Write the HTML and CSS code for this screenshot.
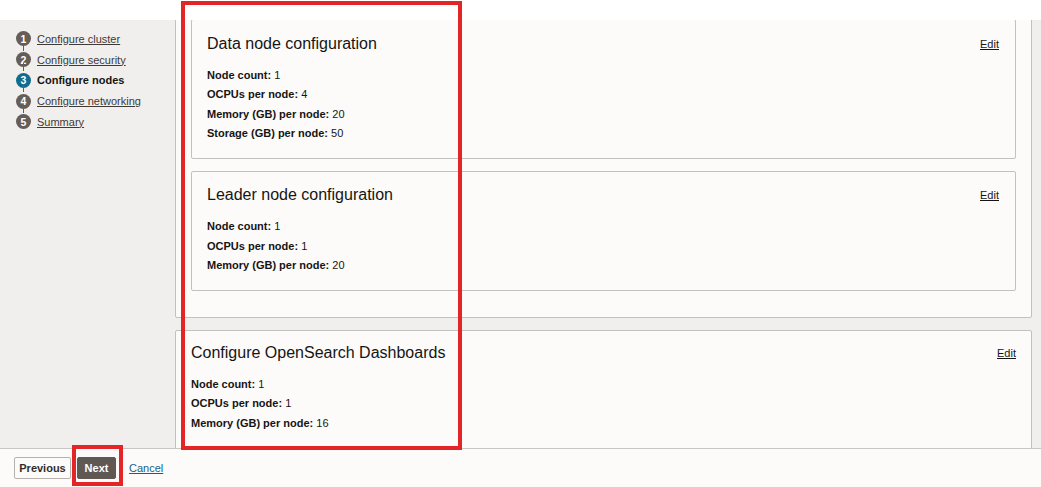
FILE: index.html
```html
<!DOCTYPE html>
<html>
<head>
<meta charset="utf-8">
<link rel="stylesheet" href="styles.css">
</head>
<body>
<div class="topbar"></div>
<div class="main">
  <nav class="sidebar">
    <div class="step"><span class="num">1</span><a class="step-link">Configure cluster</a></div>
    <div class="step"><span class="num">2</span><a class="step-link">Configure security</a></div>
    <div class="step active"><span class="num">3</span><span class="step-cur">Configure nodes</span></div>
    <div class="step"><span class="num">4</span><a class="step-link">Configure networking</a></div>
    <div class="step last"><span class="num">5</span><a class="step-link">Summary</a></div>
  </nav>
  <div class="content">
    <section class="panel first">
      <div class="card">
        <div class="card-head"><h2>Data node configuration</h2><a class="edit">Edit</a></div>
        <dl class="rows">
          <div><dt>Node count:</dt> <dd>1</dd></div>
          <div><dt>OCPUs per node:</dt> <dd>4</dd></div>
          <div><dt>Memory (GB) per node:</dt> <dd>20</dd></div>
          <div><dt>Storage (GB) per node:</dt> <dd>50</dd></div>
        </dl>
      </div>
      <div class="card">
        <div class="card-head"><h2>Leader node configuration</h2><a class="edit">Edit</a></div>
        <dl class="rows">
          <div><dt>Node count:</dt> <dd>1</dd></div>
          <div><dt>OCPUs per node:</dt> <dd>1</dd></div>
          <div><dt>Memory (GB) per node:</dt> <dd>20</dd></div>
        </dl>
      </div>
    </section>
    <section class="panel second">
      <div class="card-head"><h2>Configure OpenSearch Dashboards</h2><a class="edit">Edit</a></div>
      <dl class="rows">
        <div><dt>Node count:</dt> <dd>1</dd></div>
        <div><dt>OCPUs per node:</dt> <dd>1</dd></div>
        <div><dt>Memory (GB) per node:</dt> <dd>16</dd></div>
      </dl>
    </section>
  </div>
</div>
<footer class="footer">
  <button class="btn prev">Previous</button>
  <button class="btn next">Next</button>
  <a class="cancel">Cancel</a>
</footer>
<div class="mark mark-big"></div>
<div class="mark mark-next"></div>
</body>
</html>
```
FILE: styles.css
```css
* { box-sizing: border-box; }
html, body { margin: 0; padding: 0; }
body {
  width: 1041px;
  height: 487px;
  overflow: hidden;
  background: #ffffff;
  font-family: "Liberation Sans", Arial, sans-serif;
  color: #161513;
  position: relative;
}
.topbar { height: 20px; background: #ffffff; }
.main {
  display: flex;
  height: 428px;
  background: #f1efed;
  overflow: hidden;
}
.sidebar {
  width: 175px;
  flex: none;
  padding: 8.5px 0 0 16px;
}
.step {
  display: flex;
  align-items: center;
  height: 20.75px;
  position: relative;
  font-size: 11px;
}
.step::after {
  content: "";
  position: absolute;
  left: 7px;
  top: 14px;
  width: 1px;
  height: 8px;
  background: #655d57;
}
.step.last::after { display: none; }
.num {
  width: 15px;
  height: 15px;
  border-radius: 50%;
  background: #655d57;
  color: #fff;
  font-weight: bold;
  font-size: 10.5px;
  display: flex;
  align-items: center;
  justify-content: center;
  margin-right: 6px;
  flex: none;
}
.step.active .num { background: #116b8c; }
.step-link { color: #3f3a36; text-decoration: underline; }
.step-cur { color: #161513; font-weight: bold; }
.content {
  flex: 1;
  padding-right: 9px;
  overflow: hidden;
}
.panel {
  background: #fcfbfa;
  border: 1px solid #c4c0bb;
  border-radius: 2px;
}
.panel.first {
  margin-top: -17px;
  padding: 15px 15px 26px 15px;
}
.panel.second {
  margin-top: 12px;
  padding: 11px 14px 40px 15px;
}
.card {
  border: 1px solid #c4c0bb;
  border-radius: 2px;
  background: #fcfbfa;
  padding: 12.5px 15px 14px 15px;
}
.card + .card { margin-top: 12px; }
.card-head {
  display: flex;
  justify-content: space-between;
  align-items: center;
  height: 22px;
}
.card-head h2 {
  margin: 0;
  font-size: 16px;
  font-weight: normal;
  color: #161513;
  line-height: 22px;
}
.edit {
  font-size: 11px;
  color: #161513;
  text-decoration: underline;
  margin-right: 1px;
}
.rows {
  margin: 11px 0 0 0;
  font-size: 11px;
  line-height: 19.5px;
}
.rows dt { display: inline; font-weight: bold; }
.rows dd { display: inline; margin: 0; }
.footer {
  height: 39px;
  border-top: 1px solid #c9c5c0;
  background: #fcfbfa;
  display: flex;
  align-items: flex-start;
  padding: 8px 0 0 14px;
}
.btn {
  height: 22px;
  font-family: "Liberation Sans", Arial, sans-serif;
  font-size: 11px;
  font-weight: bold;
  border-radius: 2px;
  padding: 0;
}
.prev {
  width: 57px;
  background: #fcfbfa;
  border: 1px solid #b6b1ac;
  color: #312d2a;
}
.next {
  width: 39px;
  margin-left: 6px;
  background: #5f5853;
  border: 1px solid #5f5853;
  color: #ffffff;
}
.cancel {
  margin-left: 13px;
  font-size: 11px;
  line-height: 22px;
  color: #1a5f8a;
  text-decoration: underline;
}
.mark {
  position: absolute;
  border: 4px solid #e32528;
  pointer-events: none;
}
.mark-big { left: 181px; top: 1px; width: 281px; height: 449px; }
.mark-next { left: 72px; top: 445px; width: 51px; height: 41px; }
```
